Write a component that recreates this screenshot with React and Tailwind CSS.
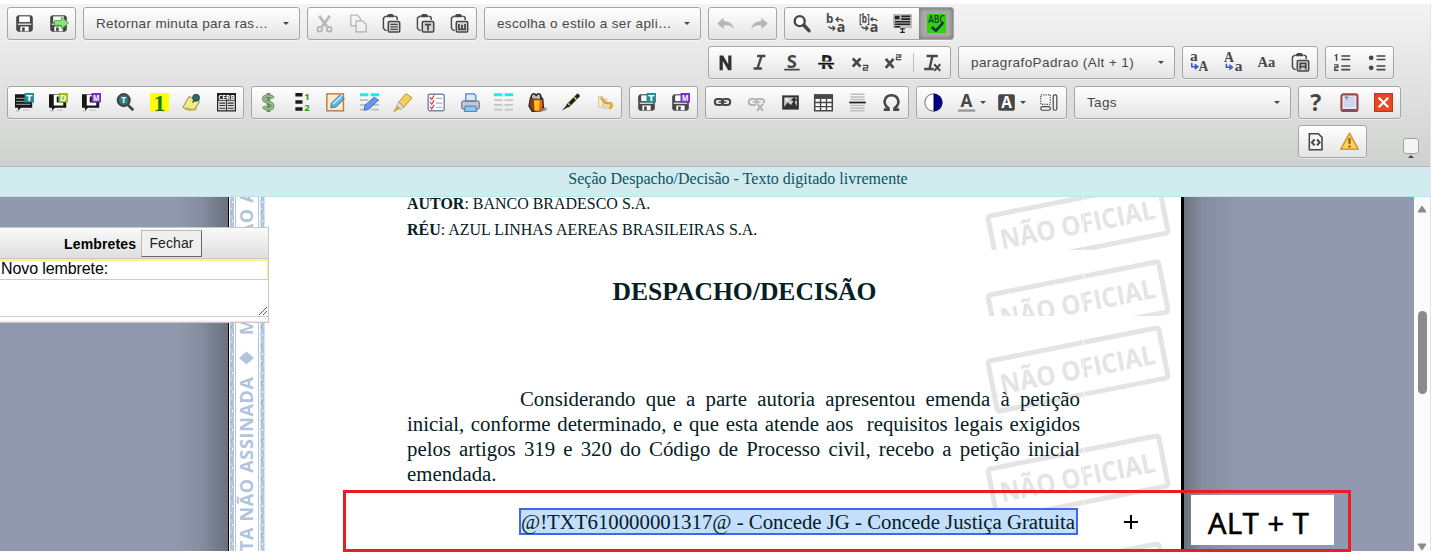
import React from "react";

const DARK = "#474747";

function Icon({ children, faded = false }) {
  return (
    <svg viewBox="0 0 16 16" className={`h-[19px] w-[19px] shrink-0 overflow-visible ${faded ? "opacity-35" : ""}`}>
      {children}
    </svg>
  );
}

function T({ x, y, size, fill = DARK, family = "Open Sans", weight = 700, italic = false, len, children }) {
  return (
    <text x={x} y={y} fontSize={size} fill={fill} fontFamily={`"${family}", sans-serif`} fontWeight={weight}
      fontStyle={italic ? "italic" : "normal"} textLength={len} lengthAdjust="spacingAndGlyphs">
      {children}
    </text>
  );
}

const Disk = () => (
  <>
    <path d="M2.500 1h11l1.500 1.500v11l-1.500 1.500h-11L1 13.500v-11z" fill={DARK} />
    <path d="M3.500 2h9v4.800h-9z" fill="#fff" />
    <path d="M2.300 8h11.400v1.200H2.300z" fill="#ddd" />
    <path d="M4.500 10.500h7v4h-7z" fill="#fff" /><path d="M6 11.300h2.200v3.200H6z" fill={DARK} />
  </>
);
const Badge = ({ c, t }) => (
  <>
    <rect x="8" y="0" width="8" height="8" fill={c} />
    <T x="9.3" y="6.600" size="7.200" len="5.400" fill="#fff">{t}</T>
  </>
);
const Clip = ({ children }) => (
  <>
    <path d="M4 2H2.800L1.200 3.500v8.500l1.600 1.800H4M10.500 2h1.300l1 1v2" fill="none" stroke={DARK} strokeWidth="1.200" />
    <path d="M4 1.300 5.500 0h3.200l1.500 1.300v1.400H4z" fill={DARK} />
    <rect x="5.300" y="6.300" width="9.600" height="8.900" rx="1" fill="#d6d6d6" stroke={DARK} strokeWidth="1.300" />
    {children}
  </>
);
const Bubble = ({ dark }) => (
  <>
    <path d="M0 1h14.500v11.500H5L2.500 15v-2.500H0z" fill="#161616" />
    {dark ? <path d="M1 4.500h9M1 7h12M1 9.500h12" stroke="#8a8f8f" strokeWidth="1" />
      : <path d="M4 1.500h5v1.500H6.500v5H12v2.500H4z" fill="#fff" />}
    <path d="M1 15h3M7 14.500h5" stroke="#c9aec9" strokeWidth="1.400" strokeDasharray="1 .7" />
  </>
);
const Chain = () => (
  <g fill="none" stroke={DARK}>
    <rect x="1.500" y="5" width="7" height="5.200" rx="2.600" strokeWidth="1.700" />
    <rect x="7.500" y="5" width="7" height="5.200" rx="2.600" strokeWidth="1.700" />
    <path d="M4.500 7.600h7" strokeWidth="1.200" />
  </g>
);

const I = {
  save: <Disk />,
  saveGo: <><Disk /><path d="M4.500 5.500h6V2.500l6 5-6 5V9.500h-6z" fill="#8ae27b" stroke="#4caa48" strokeWidth=".7" /></>,
  cut: <g fill="none" stroke={DARK}><path d="M3.500 1.500 10 10.500M12.500 1.500 6 10.500" strokeWidth="2.300" /><circle cx="4" cy="12.800" r="2" strokeWidth="1.400" /><circle cx="12" cy="12.800" r="2" strokeWidth="1.400" /></g>,
  copy: <g fill="#f3f3f3" stroke={DARK} strokeWidth="1.100"><path d="M1.500 1h5.500l2.500 2.500V10h-8z" /><path d="M6 5.800h5.500l3 2.800V15H6z" /></g>,
  paste: <Clip><path d="M7 8.700h6.300M7 10.800h6.300M7 12.900h6.300" stroke={DARK} strokeWidth="1.100" /></Clip>,
  pasteT: <Clip><path d="M7.500 9h5.200M10.100 9v4.800" stroke={DARK} strokeWidth="1.500" /></Clip>,
  pasteW: <Clip><path d="M7.500 8.500v4.500h5.200V8.500M10.100 9v4" fill="none" stroke={DARK} strokeWidth="1.500" /></Clip>,
  pasteA: <Clip><path d="M7.800 13.800V8.700h4.600v5.100M7.800 11.500h4.600" stroke={DARK} strokeWidth="1.500" fill="none" /></Clip>,
  undo: <path d="M1 8 6.500 3v3C11 6 14 8 15 12.500c-2-2.500-4.500-3.200-8.500-3v3.200z" fill={DARK} />,
  redo: <path d="M15 8 9.500 3v3C5 6 2 8 1 12.500c2-2.500 4.500-3.200 8.500-3v3.200z" fill={DARK} />,
  find: <><circle cx="6.500" cy="6" r="4.200" fill="#fff" stroke={DARK} strokeWidth="2" /><path d="m10 9.500 4.300 4.500" stroke={DARK} strokeWidth="3" strokeLinecap="round" /></>,
  repl: <><T x="0" y="7.300" size="9.800" weight={700}>b</T><T x="9" y="15.500" size="12">a</T><path d="M8.500 4.500h4M10.500 2.500l-2 2 2 2M12.500 4.500l2 1.500M2 10.500l2 1.500h3M5.500 10l2 2-2 2" stroke={DARK} strokeWidth="1.100" fill="none" /></>,
  replB: <><T x="0" y="7.600" size="9.800" len="9">[b]</T><T x="9" y="15.500" size="12">a</T><path d="M10 4.500h4M11.500 3 10 4.500l1.500 1.500M14 4.500l1.500 1.500M2 10.500l2 1.500h3M5.500 10l2 2-2 2" stroke={DARK} strokeWidth="1.100" fill="none" /></>,
  sel: <><path d="M0 0h16v12H0z" fill="#bdbdbd" /><path d="M1.500 1.500h4v3h-4z" fill="#222" /><path d="M7 2h7.500M7 4.300h7.500M1.500 6.500h13M1.500 8.700h13M1.500 10.800H6" stroke="#222" strokeWidth="1.300" /><path d="M6 12.500h4M6 15.500h4M8 12.500v3" stroke="#222" strokeWidth="1" /></>,
  abc: <><path d="M0 0h16v16H0z" fill="#33d10a" /><T x="1" y="7.800" size="9" len="14" weight={600} fill="#123e20">ABC</T><path d="m4 11 3.500 3 6-6.500" fill="none" stroke="#0d3547" strokeWidth="2.200" /></>,
  bold: <path d="M3 14.500V2h3l4.300 7.500V2H13v12.500h-2.700L5.700 6.800v7.700z" fill="#303030" />,
  ital: <path d="M6 2.500h7M3 13h7M9.800 2.500 6.300 13" stroke={DARK} strokeWidth="2" fill="none" />,
  under: <><T x="3.200" y="12.800" size="15.500">S</T><path d="M1 14h13" stroke={DARK} strokeWidth="1.500" /></>,
  strike: <><T x="3" y="13.700" size="16" fill="#202020">R</T><path d="M1 8.500h13.500" stroke="#f4f4f4" strokeWidth="2.600" /><path d="M1 9h13.500" stroke="#111" strokeWidth="1.500" /></>,
  sub: <><path d="m1.500 4.500 6.500 7M8 4.500l-6.500 7" stroke={DARK} strokeWidth="2.300" /><path d="M10 10.500h4v2h-3.500v2H14.500" fill="none" stroke={DARK} strokeWidth="1.100" /></>,
  sup: <><path d="m1.500 5 6.500 7.500M8 5l-6.500 7.500" stroke={DARK} strokeWidth="2.300" /><path d="M10 1.500h4v2h-3.500v2H14.500" fill="none" stroke={DARK} strokeWidth="1.100" /></>,
  clear: <><path d="M3 2.500h9.500M8 2.500 5.500 13M1 13.500h8" stroke={DARK} strokeWidth="2" fill="none" /><path d="m9.500 9.500 5 5.500M14.500 9.500l-5 5.500" stroke={DARK} strokeWidth="1.700" /></>,
  toUp: <><T x="0" y="6.500" size="13" family="Liberation Serif">a</T><T x="7.200" y="15" size="11.500" family="Liberation Serif">A</T><path d="M1.500 8.500v3h4M4 9.500l2.500 2L4 13.500" stroke="#3557c8" strokeWidth="1.300" fill="none" /></>,
  toLow: <><T x="0" y="7.500" size="11.500" family="Liberation Serif">A</T><T x="9" y="15" size="13" family="Liberation Serif">a</T><path d="M2 9v3h4M4.500 10l2.500 2-2.500 2" stroke="#3557c8" strokeWidth="1.300" fill="none" /></>,
  aa: <T x="0.500" y="11.500" size="13" len="15" family="Liberation Serif">Aa</T>,
  ol: <><path d="M7 2.500h7.500M7 5.500h7.500M7 11h7.500M7 14h7.500" stroke={DARK} strokeWidth="1.300" /><path d="M1.500 2.500 3 1.500V6.500M1 10h3v2H1.500v2.500H4.500" stroke={DARK} strokeWidth="1.200" fill="none" /></>,
  ul: <><path d="M8 2.500h7.500M8 5.500h7.500M8 11h7.500M8 14h7.500" stroke={DARK} strokeWidth="1.300" /><circle cx="3.500" cy="4" r="2" fill={DARK} /><circle cx="3.500" cy="12.500" r="2" fill={DARK} /></>,
  bT: <><Bubble dark /><Badge c="#258e98" t="T" /></>,
  bD: <><Bubble /><Badge c="#8dc51f" t="D" /></>,
  bM: <><Bubble /><Badge c="#7a32c6" t="M" /></>,
  lens: <><path d="m10 10 4.500 4.500" stroke="#444" strokeWidth="2.300" /><circle cx="6.500" cy="6" r="5" fill="#267d84" stroke="#444" strokeWidth="1.800" /><T x="4.400" y="8.700" size="7" fill="#fff">T</T></>,
  one: <><path d="M0 0h16v16H0z" fill="#ff0" /><T x="3" y="14.800" size="20" weight={700} fill="#167a18" family="Liberation Serif">1</T></>,
  note: <><path d="m5 3 9 4-4 7H3l-3-2z" fill="#f3eb84" stroke="#8c8648" strokeWidth=".8" /><path d="m1 12 8 1.500 3-4-1 5-6 .5z" fill="#c0ad4b" /><circle cx="11" cy="4" r="2.900" fill="#236f63" stroke="#153e38" strokeWidth=".7" /><path d="m8 8 2-2" stroke="#333" /></>,
  cerb: <><path d="M.5.500h15v14.500H.5z" fill="#ddd" stroke="#222" /><path d="M0 0h16v6.500H0z" fill="#222" /><T x="1" y="5.600" size="6.300" len="14" fill="#fff">CERB</T><path d="M2 8.500h5M9 8.500h5M2 10.500h5M9 10.500h5M2 12.800h5M9 12.800h5M8 6v9" stroke="#333" strokeWidth=".9" /></>,
  dollar: <g fill="none"><path d="M8 0v16M12 4.500C10 1.500 3.500 2 4 5.200c.5 3 7.500 2 7.500 5.500 0 3.500-6 3.500-7.800.6" stroke="#668f5b" strokeWidth="3" /><path d="M12 4.500C10 1.500 3.500 2 4 5.200c.5 3 7.500 2 7.500 5.500 0 3.500-6 3.500-7.800.6" stroke="#9bc08d" strokeWidth="1.400" /></g>,
  num: <><path d="M2 0h6v3H2zM2 6h6v3H2zM2 12h6v3H2z" fill="#1a1a1a" /><T x="9.500" y="6.300" size="8" fill="#299c0d">1</T><T x="9.500" y="15.500" size="8" fill="#299c0d">2</T></>,
  edit: <><rect x=".7" y=".7" width="14" height="14.300" fill="#ffe9cc" stroke="#b77c4d" strokeWidth="1.200" /><path d="M4 12.500 4.500 8.500 11.500 1.800l4 3L8.500 11.800z" fill="#5bb4e9" stroke="#397c9c" strokeWidth=".8" /><path d="m6 9.300 7-6.500" stroke="#c3edff" strokeWidth="1.300" /></>,
  tblEdit: <><path d="M0 1.500h7M9 1.500h7" stroke="#1ee9ee" strokeWidth="2.500" /><path d="M0 6h7M9 6h7M0 10h7M9 10h7M0 14h7M9 14h7" stroke="#bebebe" strokeWidth="1.600" /><path d="M3.500 14.500 4 10.500l8-7 3.500 2.500-8 7.500z" fill="#6797ed" stroke="#396ac4" strokeWidth=".8" /></>,
  marker: <><path d="m5 7.500 6-7 5 3.500-7 8z" fill="#f6cf58" stroke="#c08a24" strokeWidth=".8" /><path d="m5 7.500 4 4.500-3 2-3-3z" fill="#ddd" stroke="#999" strokeWidth=".6" /><path d="m3.500 11 2 2L.8 15.500z" fill="#f0b72d" stroke="#b6861d" strokeWidth=".6" /></>,
  check: <><rect x="1" y="1" width="13.500" height="14" rx="1.500" fill="#fff" stroke="#7186a9" strokeWidth="1.200" /><path d="M7.500 4.500H13M7.500 8.500H13M7.500 12H13" stroke="#a7b1c3" /><path d="m2.500 3.500 1.500 2 2-3.500M2.500 7.500l1.500 2 2-3.500M2.500 11.500l1.500 2 2-3.500" stroke="#d33844" strokeWidth="1" fill="none" /></>,
  print: <><path d="M4 7V.7h7l1.500 1.500V7" fill="#d2edff" stroke="#4f86bd" /><rect x=".6" y="6.500" width="14.800" height="7" rx="2" fill="#c3c7d4" stroke="#757e96" /><path d="M3 7h10" stroke="#757e96" /><path d="M3.500 11h9l.8 4.500H2.700z" fill="#8cc7f4" stroke="#4779b2" strokeWidth=".8" /></>,
  table2: <><path d="M0 1.500h7M9 1.500h7" stroke="#1ee9ee" strokeWidth="2.500" /><path d="M0 6h7M9 6h7M0 10h7M9 10h7M0 14h7M9 14h7" stroke="#c5c5c5" strokeWidth="1.600" /></>,
  bag: <><ellipse cx="11" cy="13.500" rx="5" ry="2" fill="#999" /><path d="M2 4 .8 11 3.500 15.500l7-.5 2.500-3-.5-7-2-2H4z" fill="#8e3d12" stroke="#222" /><path d="M3 4.500C2 0 6-.5 7 2.500 7.500-.5 12 0 10.500 5" fill="#bbb" stroke="#222" strokeWidth="1.200" /><path d="M5 6h5v9H5.500z" fill="#ffc22a" /><path d="M10 6h2v8l-3 1.500z" fill="#ec6513" /></>,
  pen: <><path d="m5 10 9-9 1.500 1.500-9 9z" fill="#202020" stroke="#202020" /><path d="m5 10 1.500 1.500-6 3.500z" fill="#222" /><path d="m11 3.500 2 2M6 8.700l1.500 1.500" stroke="#d1bc28" strokeWidth="1.500" /></>,
  hand: <><path d="M3 3h3.500v9H3zM7.500 5H10v8H7.500z" fill="#f4efcf" stroke="#cbbb9a" strokeWidth=".7" /><path d="M5 4 9 8.500h4.500c1.500 2 .5 4-2 4.500" fill="none" stroke="#dca62c" strokeWidth="2" /><circle cx="13" cy="10" r="1.500" fill="#efb73f" /></>,
  saveT: <><Disk /><Badge c="#258e98" t="T" /></>,
  saveM: <><Disk /><Badge c="#7a32c6" t="M" /></>,
  link: <Chain />,
  unlink: <><Chain /><path d="M7.500 8.500h8.500v7.500H7.500z" fill="#eee" /><path d="m8.500 9 5 6M13.500 9l-5 6" stroke={DARK} strokeWidth="1.700" /></>,
  image: <><rect x="1" y="2" width="14" height="12" fill="#333" /><rect x="2.700" y="3.700" width="10.600" height="8" fill="#ccc" /><path d="m2.500 12 3-4 3 2 2-3 3 4v1z" fill="#333" /><circle cx="5" cy="5.500" r="1.100" fill="#fff" /><path d="M11 9V5M9 6.500l2-2 2 2" stroke="#333" strokeWidth="1.500" fill="none" /></>,
  table: <><path d="M.6 2h14.800v13H.6z" fill="#fff" stroke={DARK} strokeWidth="1.300" /><path d="M0 1h16v4H0z" fill={DARK} /><path d="M.6 8h14.800M.6 11.500h14.800M5.500 5v10M10.500 5v10" stroke={DARK} strokeWidth="1.200" /></>,
  hr: <><path d="M2 1h12M2 3.300h12M2 5.500h12M2 10.500h12M2 12.800h12M2 15h12" stroke="#bebebe" strokeWidth="1.300" /><path d="M1 8h14" stroke="#222" strokeWidth="1.500" /></>,
  omega: <path d="M1.500 14h4v-1C2 10.500 1.500 7 3 4.500c2-3.500 8-3.500 10 0 1.500 2.500 1 6-2.500 8.500v1h4" fill="none" stroke={DARK} strokeWidth="2.200" />,
  contrast: <><circle cx="8" cy="8" r="7.300" fill="#fff" stroke="#888" /><path d="M8 .5a7.500 7.500 0 0 1 0 15z" fill="#000080" /></>,
  fg: <><T x="2.200" y="11.500" size="14.500">A</T><path d="M0 14.800h14.500" stroke="#999" strokeWidth="2" /></>,
  bg: <><rect x="1" y="1" width="14" height="14" rx="1.500" fill={DARK} /><T x="3.500" y="12.600" size="13" fill="#fff">A</T></>,
  blocks: <g fill="none" stroke={DARK}><rect x="1.500" y="1.500" width="8" height="8" strokeDasharray="1 1" /><rect x="1.500" y="11.500" width="8" height="3" rx="1.300" /><rect x="12" y="1.500" width="3" height="13" rx="1.300" /></g>,
  help: <T x="3.500" y="15" size="19.500">?</T>,
  about: <><rect x="1.200" y="1.200" width="13.500" height="14" rx="1.500" fill="#e4e7f6" stroke="#a14649" strokeWidth="1.800" /><path d="M3.500 3h9v9h-9z" fill="#d0d6ea" /><path d="M4 3.500h3M5 5h1" stroke="#444c68" strokeWidth=".8" /><path d="M2.500 14h11" stroke="#4d5475" strokeWidth="1" /></>,
  close: <><rect x=".5" y=".5" width="15" height="15" fill="#e94925" stroke="#c9360f" /><path d="m4 4 8 8M12 4l-8 8" stroke="#fff" strokeWidth="1.900" /></>,
  source: <><path d="M2.800 1.500h7.700l3 3V15H2.800z" fill="#f5f5f5" stroke={DARK} strokeWidth="1.300" /><path d="m7.200 6.300-2.200 2.500 2.200 2.500M9.300 6.300l2.200 2.500-2.200 2.500" fill="none" stroke={DARK} strokeWidth="1.700" /></>,
  warn: <><path d="M8 1 15.300 14.500H.7z" fill="#f8d45c" stroke="#cf9830" strokeWidth="1.300" strokeLinejoin="round" /><path d="M8 5v5" stroke="#a0641c" strokeWidth="2" /><circle cx="8" cy="12.200" r="1.100" fill="#a0641c" /></>,
};

const GROUP = "flex h-[33px] shrink-0 rounded-[3px] border border-[#a6a6a6] bg-linear-to-b from-white to-[#e4e4e4] shadow-[0_1px_0_#ffffff80]";

function Group({ w, names, faded = [], active }) {
  return (
    <div className={`${GROUP} ${w}`}>
      {names.map((n) => (
        <button key={n} className={`flex flex-1 items-center justify-center ${n === active ? "rounded-r-xs bg-[#aaa] shadow-[inset_0_0_5px_#666]" : ""}`}>
          <Icon faded={faded.includes(n)}>{I[n]}</Icon>
        </button>
      ))}
    </div>
  );
}

const Caret = ({ className = "" }) => (
  <svg viewBox="0 0 6 3" className={`h-[3px] w-[6px] shrink-0 ${className}`}><path d="M0 0h6L3 3z" fill={DARK} /></svg>
);

function Combo({ label, spacing = "tracking-[.35px]" }) {
  return (
    <div className={`${GROUP} w-[217px] items-center pr-2.5 pl-3`}>
      <span className={`flex-1 font-["Liberation_Sans",sans-serif] text-[13.5px] leading-5 whitespace-nowrap text-[#474747] ${spacing}`}>{label}</span>
      <Caret />
    </div>
  );
}

function Stamp({ dy, bottom }) {
  const id = `stamp${dy}`;
  return (
    <g clipPath={`url(#${id})`}>
      <clipPath id={id}><rect x="0" y="0" width="190" height={bottom} /></clipPath>
      <g transform={`translate(0 ${dy})`}>
        <g transform="translate(96 44.500) rotate(-11.200)">
          <rect x="-87" y="-25.500" width="174" height="51" rx="2.500" fill="none" stroke="#e4e4e4" strokeWidth="5" />
          <text x="-79" y="9.500" fontSize="27" fontWeight="700" fontFamily='"Open Sans", sans-serif' fill="#e4e4e4" textLength="157" lengthAdjust="spacingAndGlyphs">NÃO OFICIAL</text>
        </g>
        <path d="M101.500 0v90" stroke="#fff" strokeOpacity=".7" />
      </g>
    </g>
  );
}

function SideBand() {
  const label = { fontSize: 18, fontWeight: 700, fontFamily: '"Open Sans", sans-serif', fill: "#b0c4de", textLength: 228, lengthAdjust: "spacing" };
  return (
    <svg viewBox="0 0 36 354" className="h-[354px] w-[36px] shrink-0">
      <defs>
        <pattern id="grain" width="5" height="19" patternUnits="userSpaceOnUse">
          <rect width="5" height="19" fill="#b1c5df" />
          <path d="M1 1h1v1H1zM3 4h1v2H3zM0 8h1v1H0zM2 11h1v1H2zM4 15h1v1H4z" fill="#f4f8fc" />
          <path d="m0 6 2-2M2 17l2-3" stroke="#8197b7" strokeWidth=".7" />
        </pattern>
      </defs>
      <rect width="36" height="354" fill="#fff" />
      <rect x="1" width="4" height="354" fill="url(#grain)" />
      <path d="M6.500 0v354M29.500 0v354" stroke="#b0c4de" />
      <rect x="31.500" width="4" height="354" fill="url(#grain)" />
      <text transform="translate(24.200 408) rotate(-90)" {...label}>MINUTA NÃO ASSINADA</text>
      <text transform="translate(24.200 138) rotate(-90)" {...label}>MINUTA NÃO ASSINADA</text>
      <path d="m17.500 154.500 7.500 6.500-7.500 6.500-7.500-6.500z" fill="#b0c4de" />
    </svg>
  );
}

function Reminders() {
  return (
    <aside className='absolute top-[30px] left-0 flex h-[96px] w-[269px] flex-col border-y border-r border-[#c8c8c8] bg-white font-["Liberation_Sans",sans-serif] text-black'>
      <header className="flex h-[31px] items-center border-b border-[#c8c8c8] bg-linear-to-b from-[#fafafa] to-[#dedede] pt-px pl-16">
        <b className="w-[77px] text-[14px] leading-4 tracking-[.15px]">Lembretes</b>
        <button className="h-[27px] w-[61px] border border-t-[#bbb] border-r-[#666] border-b-[#666] border-l-[#bbb] bg-[#efefef] text-[14px] tracking-[.1px] text-[#222]">Fechar</button>
      </header>
      <div className="h-[21px] border-t-2 border-r border-b border-t-[#faf58a] border-r-[#faf58a] border-b-[#ccc] pl-px text-[16px] leading-[15px] tracking-[-.1px]">Novo lembrete:</div>
      <div className="flex h-[37px] items-end justify-end border-b border-[#ccc] p-px">
        <svg viewBox="0 0 8 8" className="size-2"><path d="m0 8 8-8M4 8l4-4" stroke="#555" strokeWidth="1" /></svg>
      </div>
      <div className="flex-1 border-b border-[#faf58a]" />
    </aside>
  );
}

const Line = ({ children, last }) => (
  <div className={`h-[25px] whitespace-nowrap ${last ? "" : "[text-align-last:justify]"}`}>{children}</div>
);

export default function App() {
  return (
    <div className="h-[556px] w-[1434px] overflow-hidden bg-white pt-1">
      <div className="h-[547px] w-[1431px] border-r border-[#e4e4e4]">
        <div className="flex h-[163px] flex-col gap-y-1.5 border-b border-[#b6b6b6] bg-linear-to-b from-[#f3f3f3] to-[#cfd1cf] pt-[3px] pl-[7px]">
          <div className="flex h-[33px] gap-[7px]">
            <Group w="w-[69px]" names={["save", "saveGo"]} />
            <Combo label="Retornar minuta para ras…" />
            <Group w="w-[170px]" names={["cut", "copy", "paste", "pasteT", "pasteW"]} faded={["cut", "copy"]} />
            <Combo label="escolha o estilo a ser apli…" />
            <Group w="w-[69px]" names={["undo", "redo"]} faded={["undo", "redo"]} />
            <Group w="w-[170px]" names={["find", "repl", "replB", "sel", "abc"]} active="abc" />
          </div>
          <div className="flex h-[34px] gap-[7px] pl-[701px]">
            <div className={`${GROUP} w-[243px]`}>
              {["bold", "ital", "under", "strike", "sub", "sup"].map((n) => (
                <button key={n} className="flex w-[33.6px] items-center justify-center"><Icon>{I[n]}</Icon></button>
              ))}
              <i className="mx-0.5 my-1.5 w-px bg-[#c0c0c0]" />
              <button className="flex flex-1 items-center justify-center"><Icon>{I.clear}</Icon></button>
            </div>
            <Combo label="paragrafoPadrao (Alt + 1)" spacing="tracking-[.42px]" />
            <Group w="w-[136px]" names={["toUp", "toLow", "aa", "pasteA"]} />
            <Group w="w-[69px]" names={["ol", "ul"]} />
          </div>
          <div className="flex h-[33px] gap-[7px]">
            <Group w="w-[237px]" names={["bT", "bD", "bM", "lens", "one", "note", "cerb"]} />
            <Group w="w-[371px]" names={["dollar", "num", "edit", "tblEdit", "marker", "check", "print", "table2", "bag", "pen", "hand"]} />
            <Group w="w-[69px]" names={["saveT", "saveM"]} />
            <Group w="w-[204px]" names={["link", "unlink", "image", "table", "hr", "omega"]} faded={["unlink"]} />
            <div className={`${GROUP} w-[151px] items-center pl-[7px]`}>
              <Icon>{I.contrast}</Icon>
              <span className="ml-[15px] flex items-center gap-[3px]"><Icon>{I.fg}</Icon><Caret /></span>
              <span className="ml-[11px] flex items-center gap-[4px]"><Icon>{I.bg}</Icon><Caret /></span>
              <span className="ml-[13px]"><Icon>{I.blocks}</Icon></span>
            </div>
            <Combo label="Tags" />
            <Group w="w-[103px]" names={["help", "about", "close"]} />
          </div>
          <div className="flex h-[33px] pl-[1291px]">
            <Group w="w-[69px]" names={["source", "warn"]} />
            <button className="mt-[13px] ml-9 flex flex-col items-center">
              <i className="size-4 shrink-0 rounded-[3px] border border-[#a0a0a0] bg-[#f4f4f4]" />
              <Caret className="mt-px rotate-180" />
            </button>
          </div>
        </div>

        <div className='h-[30px] border-b border-[#b8e6ec] bg-[#d1ebef] pl-[46px] text-center font-["Liberation_Serif",serif] text-[16px] leading-[24px] text-[#0c5460]'>
          Seção Despacho/Decisão - Texto digitado livremente
        </div>

        <main className="relative flex h-[354px] overflow-hidden bg-[#9199ae]">
          <div className="w-[228px] shrink-0 bg-linear-to-r from-[#9199ae] from-77% via-[#868ea0] via-88% to-[#6a717e] to-100%" />
          <div className="flex w-[956px] shrink-0 border-r-[3px] border-l border-black bg-white">
            <SideBand />
            <article className='relative ml-[142px] w-[674px] shrink-0 font-["Liberation_Serif",serif] text-[#042024]'>
              <svg viewBox="0 0 190 354" className="absolute top-0 left-[575px] h-[354px] w-[190px]">
                <Stamp dy={-17} bottom={53} />
                <Stamp dy={62} bottom={119} />
                <Stamp dy={128} bottom={240} />
                <Stamp dy={236} bottom={311} />
                <Stamp dy={344} bottom={354} />
              </svg>
              <div className="relative">
                <p className="h-[26px] text-[15.980px] leading-[14px]"><b>AUTOR</b>: BANCO BRADESCO S.A.</p>
                <p className="h-[26px] text-[15.980px] leading-[14px]"><b>RÉU</b>: AZUL LINHAS AEREAS BRASILEIRAS S.A.</p>
                <h1 className="mt-[27px] h-8 pl-px text-center text-[25.600px] leading-8 font-bold">DESPACHO/DECISÃO</h1>
                <div className="mt-[78px] w-[673px] text-[20.800px] leading-[25px]">
                  <Line><span className="inline-block w-[113px]" />Considerando que a parte autoria apresentou emenda à petição</Line>
                  <Line>inicial, conforme determinado, e que esta atende aos&nbsp; requisitos legais exigidos</Line>
                  <Line>pelos artigos 319 e 320 do Código de Processo civil, recebo a petição inicial</Line>
                  <Line last>emendada.</Line>
                </div>
                <div className="mt-[22px] ml-[112px] h-[27px] w-[559px] border-2 border-[#4169e1] bg-[#c3dffb] text-[20.800px] leading-[23px] whitespace-nowrap">
                  @!TXT610000001317@ - Concede JG - Concede Justiça Gratuita
                </div>
              </div>
            </article>
          </div>
          <div className="flex-1 bg-linear-to-r from-[#6c737f] via-[#858da1] via-8% to-[#9199ae] to-25%" />
          <div className="flex w-4 shrink-0 flex-col items-center bg-[#fbfbfb] pt-2">
            <svg viewBox="0 0 10 8" className="h-2 w-2.5"><path d="M1 7h8L5 1z" fill="#8b8b8b" stroke="#8b8b8b" strokeLinejoin="round" /></svg>
            <i className="mt-[98px] h-[83px] w-[9px] rounded-full bg-[#8b8b8b]" />
            <svg viewBox="0 0 10 8" className="mt-[149px] h-2 w-2.5"><path d="M1 1h8L5 7z" fill="#8b8b8b" stroke="#8b8b8b" strokeLinejoin="round" /></svg>
          </div>
          <Reminders />
        </main>
      </div>

      <div className='absolute top-[490px] left-[343px] flex h-[62px] w-[1008px] border-[3px] border-[#ed1c24] font-["Open_Sans",sans-serif] text-black'>
        <svg viewBox="0 0 14 14" className="mt-[22px] ml-[778px] size-3.5"><path d="M7 0v14M0 7h14" stroke="#000" strokeWidth="2" /></svg>
        <div className="mt-0.5 ml-[53px] h-[50px] w-[143px] bg-white pl-[17px] text-[29px] leading-[56px] font-medium tracking-[.6px] whitespace-nowrap [-webkit-text-stroke:.7px_black]">ALT + T</div>
      </div>
    </div>
  );
}
